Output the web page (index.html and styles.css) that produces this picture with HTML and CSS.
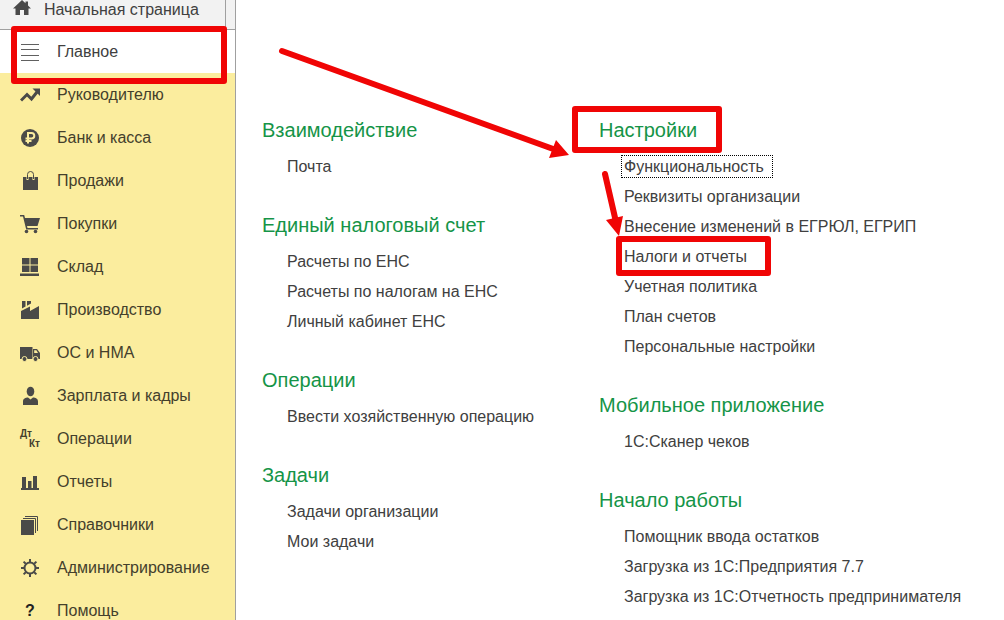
FILE: index.html
```html
<!DOCTYPE html>
<html lang="ru">
<head>
    <meta charset="UTF-8">
    <meta name="viewport" content="width=device-width, initial-scale=1.0">
    <title>Главное</title>
    <link rel="stylesheet" href="styles.css">
</head>
<body>
    <nav class="sidebar">
        <div class="home">
            <a href="#" class="home-tab">
                <svg class="home-icon" viewBox="0 0 18 16"><path d="M9 0L0 8.500h2.500V15H7v-5h4v5h4.500V8.500H18L15 5.600V1.500h-2.500v1.800z"/></svg>
                Начальная страница
            </a>
        </div>

        <a href="#" class="item active marked">
            <svg class="icon" viewBox="0 0 20 20"><path class="lines" d="M1 2.500h18M1 7.500h18M1 13.500h18M1 18.500h18"/></svg>
            Главное
        </a>
        <a href="#" class="item">
            <svg class="icon" viewBox="0 0 20 20"><path class="trend" d="M1 15.500l6-6 4.500 4.500L17 7"/><path d="M12.500 3.500H20V11z"/></svg>
            Руководителю
        </a>
        <a href="#" class="item">
            <svg class="icon" viewBox="0 0 20 20"><circle cx="10" cy="10" r="9"/><path class="cut" d="M8 15.500V5h3.500a2.800 2.800 0 0 1 0 5.600H5.500M5.500 13h6"/></svg>
            Банк и касса
        </a>
        <a href="#" class="item">
            <svg class="icon" viewBox="0 0 20 20"><path d="M3 6h15v13H3z"/><path class="cut" d="M7.500 9V4.500a3 3 0 0 1 6 0V9"/><path class="handle" d="M7.500 8V3.500a3 3 0 0 1 6 0V8"/></svg>
            Продажи
        </a>
        <a href="#" class="item">
            <svg class="icon" viewBox="0 0 20 20"><path d="M0 1h4.200l.8 3h15l-2.500 8H7l.5 2H18v1.500H6.200L3 2.500H0z"/><circle cx="6.500" cy="17.500" r="1.800"/><circle cx="15.500" cy="17.500" r="1.800"/></svg>
            Покупки
        </a>
        <a href="#" class="item">
            <svg class="icon" viewBox="0 0 20 20"><path d="M2 1h7.500v6.500H2zM10.500 1H18v6.500h-7.500zM2 8.500h7.500V15H2zM10.500 8.500H18V15h-7.500zM0 16.500h19V19H0z"/></svg>
            Склад
        </a>
        <a href="#" class="item">
            <svg class="icon" viewBox="0 0 20 20"><path d="M1 19v-8l9-4.500V11l9-5v13zM2 1h3.500v5.500L2 8.500zM7 1h4v2.500L7 5.700z"/></svg>
            Производство
        </a>
        <a href="#" class="item">
            <svg class="icon" viewBox="0 0 20 20"><path d="M0 4h12.500v12H0zM13 6h4l3 4v6h-7z"/><path class="hole" d="M14.200 7.300h2.200L18 10h-3.800z"/><circle class="wheel" cx="4.500" cy="16" r="2.500"/><circle class="wheel" cx="15.500" cy="16" r="2.500"/></svg>
            ОС и НМА
        </a>
        <a href="#" class="item">
            <svg class="icon" viewBox="0 0 20 20"><ellipse cx="10.500" cy="5.500" rx="3.800" ry="4.800"/><path d="M3 19v-3.500c0-3 2.500-4 5-4l2.500 2 2.500-2c2.500 0 5 1 5 4V19z"/></svg>
            Зарплата и кадры
        </a>
        <a href="#" class="item">
            <span class="icon dtkt"><b>Дт</b><b>Кт</b></span>
            Операции
        </a>
        <a href="#" class="item">
            <svg class="icon" viewBox="0 0 20 20"><path d="M2 5h4v11H2zM8 9h3.500v7H8zM13 4h4v12h-4zM1 16h18v2H1z"/></svg>
            Отчеты
        </a>
        <a href="#" class="item">
            <svg class="icon" viewBox="0 0 20 20"><path d="M1 5h13v15H1z"/><path class="pages" d="M3 3.500h12.500V18M5 1.500h12.500V16"/></svg>
            Справочники
        </a>
        <a href="#" class="item">
            <svg class="icon" viewBox="0 0 20 20"><circle class="gear" cx="10" cy="10" r="5.500"/><path class="teeth" d="M10 1v3M10 16v3M1 10h3M16 10h3M3.600 3.600l2.200 2.200M14.200 14.200l2.200 2.200M3.600 16.400l2.200-2.200M14.200 5.800l2.200-2.200"/></svg>
            Администрирование
        </a>
        <a href="#" class="item">
            <span class="icon help">?</span>
            Помощь
        </a>
    </nav>

    <main class="content">
        <div class="column">
            <section>
                <h2>Взаимодействие</h2>
                <ul>
                    <li><a href="#">Почта</a></li>
                </ul>
            </section>
            <section>
                <h2>Единый налоговый счет</h2>
                <ul>
                    <li><a href="#">Расчеты по ЕНС</a></li>
                    <li><a href="#">Расчеты по налогам на ЕНС</a></li>
                    <li><a href="#">Личный кабинет ЕНС</a></li>
                </ul>
            </section>
            <section>
                <h2>Операции</h2>
                <ul>
                    <li><a href="#">Ввести хозяйственную операцию</a></li>
                </ul>
            </section>
            <section>
                <h2>Задачи</h2>
                <ul>
                    <li><a href="#">Задачи организации</a></li>
                    <li><a href="#">Мои задачи</a></li>
                </ul>
            </section>
        </div>

        <div class="column">
            <section>
                <h2><span class="marked">Настройки</span></h2>
                <ul>
                    <li><a href="#" class="focused">Функциональность</a></li>
                    <li><a href="#">Реквизиты организации</a></li>
                    <li><a href="#">Внесение изменений в ЕГРЮЛ, ЕГРИП</a></li>
                    <li><a href="#" class="marked">Налоги и отчеты</a></li>
                    <li><a href="#">Учетная политика</a></li>
                    <li><a href="#">План счетов</a></li>
                    <li><a href="#">Персональные настройки</a></li>
                </ul>
            </section>
            <section>
                <h2>Мобильное приложение</h2>
                <ul>
                    <li><a href="#">1С:Сканер чеков</a></li>
                </ul>
            </section>
            <section>
                <h2>Начало работы</h2>
                <ul>
                    <li><a href="#">Помощник ввода остатков</a></li>
                    <li><a href="#">Загрузка из 1С:Предприятия 7.7</a></li>
                    <li><a href="#">Загрузка из 1С:Отчетность предпринимателя</a></li>
                </ul>
            </section>
        </div>

        <!-- Стрелки поверх меню -->
        <svg class="arrows" width="420" height="250" viewBox="0 0 420 250">
            <path class="shaft" d="M46 51L320 150M369 174L380 222"/>
            <path class="head" d="M320 140L333 155L313 158zM370 220L387 216L383 236z"/>
        </svg>
    </main>
</body>
</html>
```

FILE: styles.css
```css
* {
    box-sizing: border-box;
}
body {
    display: flex;
    margin: 0;
    height: 100vh;
    overflow: hidden;
    font-family: "Liberation Sans", Arial, sans-serif;
    font-size: 16px;
    color: #404040;
    background-color: #ffffff;
}
a {
    color: inherit;
    text-decoration: none;
    white-space: nowrap;
}
.sidebar {
    flex: 0 0 236px;
    height: max-content;
    border-right: 1px solid #a0a0a0;
    background-color: #fbed9e;
}
.home {
    height: 30px;
    padding-right: 9px;
    background-color: #f2f2f2;
    border-bottom: 1px solid #a0a0a0;
}
.home-tab {
    display: flex;
    gap: 13px;
    height: 29px;
    padding-left: 13px;
    line-height: 20px;
    border-right: 1px solid #a0a0a0;
}
.home-icon {
    width: 18px;
    height: 16px;
    fill: #4a4a4a;
}
.item {
    position: relative;
    display: flex;
    align-items: center;
    gap: 17px;
    height: 43px;
    padding-left: 20px;
    color: #44402c;
}
.item.active {
    color: #404040;
    background-color: #ffffff;
}
.icon {
    flex: none;
    width: 20px;
    height: 20px;
    fill: #4a4a48;
}
.icon path, .icon circle {
    stroke-width: 2;
}
.icon .lines {
    stroke: #606060;
    stroke-width: 1;
}
.icon .trend {
    fill: none;
    stroke: #4a4a48;
    stroke-width: 3;
}
.icon .cut {
    fill: none;
    stroke: #fbed9e;
}
.icon .handle {
    fill: none;
    stroke: #4a4a48;
    stroke-width: 1;
}
.icon .hole {
    fill: #fbed9e;
}
.icon .wheel {
    stroke: #fbed9e;
    stroke-width: 1;
}
.icon .pages {
    fill: none;
    stroke: #4a4a48;
    stroke-width: 1;
}
.icon .gear {
    fill: none;
    stroke: #4a4a48;
}
.icon .teeth {
    stroke: #4a4a48;
    stroke-width: 2;
}
.dtkt {
    display: flex;
    flex-direction: column;
    font-size: 10px;
    line-height: 10px;
}
.dtkt b:last-child {
    text-align: right;
}
.help {
    font-weight: bold;
    line-height: 20px;
    text-align: center;
    color: #222222;
}
.content {
    position: relative;
    flex: 1;
    display: grid;
    grid-template-columns: 337px 1fr;
    align-content: start;
    padding: 109px 0 0 26px;
}
section {
    margin-bottom: 22px;
}
h2 {
    margin: 0 0 1px;
    font-size: 20px;
    font-weight: normal;
    line-height: 42px;
    color: #159447;
}
ul {
    margin: 0;
    padding: 0 0 0 25px;
    list-style: none;
}
li {
    line-height: 30px;
}
.focused {
    padding-right: 6px;
    outline: 1px dotted #000000;
    outline-offset: 2px;
}
/* Красные рамки */
.marked {
    position: relative;
}
.marked::after {
    content: "";
    position: absolute;
    z-index: 1;
    border: 6px solid #f00505;
    border-radius: 3px;
}
.item.marked::after {
    inset: -4px 8px -11px 11px;
}
h2 .marked::after {
    inset: -13px -25px -12px -27px;
}
li .marked::after {
    inset: -12px -24px -11px -8px;
}
.arrows {
    position: absolute;
    top: 0;
    left: 0;
    pointer-events: none;
}
.shaft {
    fill: none;
    stroke: #f00505;
    stroke-width: 6;
    stroke-linecap: round;
}
.head {
    fill: #f00505;
}
```
